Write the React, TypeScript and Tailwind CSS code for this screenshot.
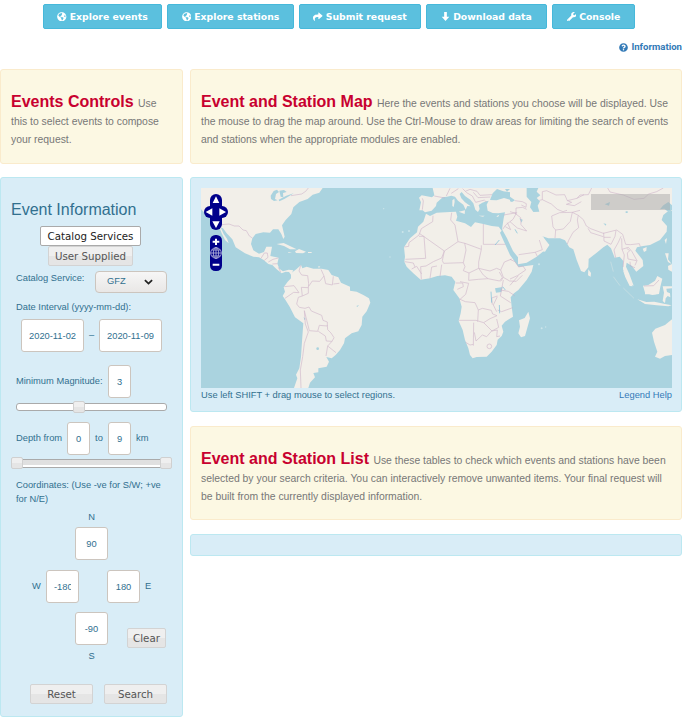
import type { ReactNode } from "react";
import { FaGlobeAmericas, FaShare, FaWrench, FaQuestionCircle } from "react-icons/fa";

function DownArrow() {
  return (
    <svg viewBox="0 0 10 10" className="h-[9px] w-[9px]" fill="currentColor">
      <path d="M3.5 0h3v5.2h2.7L5 10 .8 5.2h2.7z" />
    </svg>
  );
}

function NavButton({ icon, label, size }: { icon: ReactNode; label: string; size: string }) {
  return (
    <button
      className={`flex h-[25px] items-center justify-center gap-[3px] whitespace-nowrap rounded-[2px] border border-[#46b8da] bg-[#5bc0de] font-['DejaVu_Sans',sans-serif] text-[9.3px] font-bold text-white ${size}`}
    >
      {icon}
      <span>{label}</span>
    </button>
  );
}

function Intro({ title, children, className }: { title: string; children: ReactNode; className: string }) {
  return (
    <section className={`rounded-[3px] border border-[#faebcc] bg-[#fcf8e3] px-[10px] pt-[23px] ${className}`}>
      <p className="text-[10.4px] leading-[18px] text-[#777]">
        <span className="mr-[1.5px] text-[16px] font-bold text-[#c8002f]">{title}</span> {children}
      </p>
    </section>
  );
}

function Field({ value, size }: { value: string; size: string }) {
  return (
    <input
      readOnly
      value={value}
      className={`h-[33px] rounded-[3px] border border-[#ccc5be] bg-white px-[7px] text-[9.33px] text-[#31708f] outline-none ${size}`}
    />
  );
}

function GreyButton({ label, size }: { label: string; size: string }) {
  return (
    <button
      className={`flex h-[20px] items-center justify-center rounded-[2px] border border-[#d3d3d3] bg-linear-to-b from-[#efefef] from-50% to-[#e5e5e5] to-50% pt-px font-['DejaVu_Sans',sans-serif] text-[10.25px] text-[#555] ${size}`}
    >
      {label}
    </button>
  );
}

function Handle({ place }: { place: string }) {
  return (
    <span
      className={`absolute h-[12px] w-[12px] rounded-[2px] border border-[#d0d0d0] bg-linear-to-b from-[#efefef] from-50% to-[#e5e5e5] to-50% ${place}`}
    />
  );
}

function WorldMap() {
  return (
    <svg viewBox="48 54 1413 600" className="block h-[200px] w-[471px] bg-[#aad3df]" preserveAspectRatio="none">
      <g fill="#f2efe9">
        <path d="M48 54V118L60 130 75 145 88 150 103 172 110 190 120 210 131 220 126 206 116 192 107 172 114 175 125 190 142 208 152 232 180 250 205 260 222 262 236 270 250 282 262 285 275 298 290 310 302 305 312 306 318 314 325 301 311 299 294 304 283 296 277 281 281 263 256 258 261 230 244 230 237 246 222 251 205 241 198 222 202 205 212 192 235 187 255 188 264 178 280 178 289 192 295 207 299 200 291 166 302 150 319 132 325 112 343 96 368 87 383 74 403 68 413 54Z" />
        <path d="M318 310L334 298 348 285 352 295 365 290 385 296 410 296 430 300 440 315 460 322 468 338 495 350V362L515 365 535 375 552 385 556 398 545 424 532 440 530 465 520 484 500 490 480 505 477 520 465 540 452 555 440 565 424 561 432 575 425 590 400 595 400 607 385 609 390 622 375 638 370 654H327L337 625 333 614 343 595 348 560 352 500 355 460 330 442 314 410 300 388 293 378 300 365 296 352 308 335 318 325Z" />
        <path d="M275 222L296 219 335 238 315 238 297 228ZM330 244L342 237 363 245 354 250 333 249ZM309 246L321 248 311 249ZM369 246H380V249H369ZM400 288L406 290 401 294Z" />
      </g>
      <g transform="translate(495)">
        <g fill="#f2efe9">
          <path d="M228 131L240 138 260 128 300 126 318 125 322 140 318 152 345 160 363 171 375 157 400 162 425 168 446 170 455 182 450 188 462 215 480 255 500 283 506 291 550 285 545 305 530 330 505 360 492 370 482 382 485 410 489 440 465 455 455 467 460 485 455 498 443 509 440 525 425 545 410 560 380 561 368 565 360 555 355 535 345 510 338 480 326 453 332 430 335 410 328 385 310 360 316 335 305 320 285 316 262 318 240 325 212 329 190 310 170 290 163 275 165 260 162 232 180 205 201 187 204 170 220 155Z" />
          <path d="M248 54L253 76 246 82 215 76 207 83 213 97 208 121 218 121 225 127 245 122 258 108 260 98 278 82 291 80 304 77 315 80 324 92 340 104 347 119 352 108 362 109 345 97 334 85 329 72 335 66 345 78 361 89 370 100 376 119 384 126 389 117 386 105 397 98 405 95 416 92 410 104 413 122 428 129 445 130 465 127 461 145 456 178 471 205 489 243 504 262V283L530 278 560 260 585 240 598 225 585 212 579 200 567 209 550 204 530 174 500 130V54Z" />
          <path d="M326 125L345 121 344 132ZM307 91L313 86 314 95 311 111 307 108ZM386 137H404L399 140ZM439 139L448 134 444 141ZM535 425L540 445 525 498 513 502 505 490 510 470 507 451 524 444Z" />
          <path d="M510 232L585 245 598 225 579 200 500 130H495Z" />
        </g>
        <g fill="#aad3df">
          <path d="M420 90L428 70 441 57 460 64 485 67 513 86 490 92 462 84 440 91Z" />
          <path d="M435 355L458 351 454 366 438 368ZM465 57L480 57 471 65Z" />
        </g>
      </g>
      <g transform="translate(975)">
        <path fill="#f2efe9" d="M0 54H486V122L472 125 460 135 455 150 471 168 470 185 450 210 420 225 395 229 381 232 376 242 398 270 400 288 379 305 365 287 350 278 348 290 357 310 371 347 365 344 347 320 339 298 340 273 329 260 314 263 303 235 292 224 280 232 260 248 236 267 235 292 223 307 213 303 200 270 190 238 178 232 165 211 150 205 115 205 102 200 80 197 60 176 50 178 0 175Z" />
        <g fill="#f2efe9">
          <path d="M235 298L243 309 242 320 234 316ZM339 301L357 323 368 349 359 348 346 322ZM398 236L410 231 409 242 402 246ZM464 210L471 204 468 222ZM465 250H476L474 268 485 282 474 276ZM474 288L486 282V305L475 299ZM399 347L415 345 435 332 442 318 457 326 451 350 447 372 427 375 405 368ZM458 349H486V355L469 356 471 366 480 370 481 382 473 378 467 385 465 399 458 393 462 368Z" />
          <path d="M382 388L409 396 433 395 465 402 485 406 475 409 440 406 405 402ZM405 360L440 360 437 373 405 373Z" />
          <path d="M486 448L465 465 436 476 426 488 432 515 442 545 435 560 450 566 465 558 486 555Z" />
        </g>
        <path fill="#aad3df" d="M50 54H85L80 65 91 76 80 84 90 94 83 107 88 125 70 126 60 112 64 96 50 80ZM0 80L15 91 6 96 0 94ZM450 118L460 106 475 96 486 106V120L476 127 463 116ZM28 145L38 149 35 158ZM280 160L289 162 287 167ZM347 124H353V129H347ZM284 103L300 96 297 107Z" />
        <path fill="none" stroke="#f2efe9" strokeWidth="2" d="M302 275L310 305 M310 320L330 347 M340 354L372 385" opacity=".5" />
      </g>
      <g fill="#aad3df">
        <path d="M257 77L266 63 276 59 282 66 273 72 270 87 278 91 267 93 258 87ZM283 62L297 60 305 66 294 69 295 82 287 80ZM281 89L304 77 326 70 318 75 298 87 283 94Z" />
        <circle cx="398" cy="536" r="4" />
        <path d="M514 408L522 405 517 411ZM356 441L362 447 358 450Z" />
      </g>
      <g fill="none" stroke="#c9adc6" strokeWidth="2.2" opacity=".72" strokeLinejoin="round">
        <path d="M110 164L132 162 148 168 162 168 174 180 184 182 193 198 202 204M228 265L238 249 247 249 249 262 238 271M250 276L264 268 280 264M262 282L277 281M280 292L287 306M318 77L350 72 362 64 370 54" />
        <path d="M347 286L342 303 350 315 368 317 371 341 370 353 349 352 352 378 340 382 335 402 343 412 360 415 372 411 379 423 410 436 414 451 427 456 427 468 403 466 398 484 373 482 358 422M400 484L421 498 424 513 441 514 447 503 438 489 428 479 427 466M428 528L441 514M428 528L453 548M428 528L423 558M358 422L361 462 370 486 358 520 353 560 346 600 348 654M371 349L382 333 404 334 417 318 408 298M417 318L422 341 442 345 445 319M445 342L463 340M298 350L327 347 342 368 326 367 300 385M352 378L370 370 370 353" />
      </g>
      <g transform="translate(495)" fill="none" stroke="#c9adc6" strokeWidth="2.2" opacity=".72" strokeLinejoin="round">
        <path d="M217 85L220 93 217 119M249 137L248 155 214 176 207 195 177 218 176 229 163 231M208 190L283 243 324 215 315 165 302 150 305 128M207 199H222L227 265 166 268M324 215L345 220 394 238V226M400 162V223H466M283 243L275 264 250 275 228 288 212 290 214 328M283 243L277 272 281 280 340 278 348 240 344 219M394 238L386 276 386 295 357 309 340 302 345 290 340 278M386 295L400 315 414 326 449 333 457 322 448 306M386 295L420 303 440 295 452 300 463 276 485 267M452 300L460 322 479 333 499 334 517 316M460 322L452 334M357 309L356 331 385 328 414 326M330 335L356 340 347 373 329 389 M317 339H338L340 350 322 358M240 325L245 291 261 288M270 320L275 284M185 297L200 289 215 312M164 275L190 279 195 291M460 330L451 378M451 360L475 364 494 377M451 378L482 398M442 378L425 384 427 404" />
        <path d="M328 387L346 395 375 398 385 420 383 455M327 451H378L401 458 420 446 441 437 428 432 424 421 397 415 385 420M371 458L370 527M373 487L378 513 397 495 410 500 425 483 442 480 440 500 450 498M401 458L426 483 446 472 440 447M443 420L455 425 488 413M442 380L430 405 440 425M347 517L360 525 370 523" />
        <circle cx="418" cy="529" r="7" />
        <path d="M253 78L285 84M289 78L300 55M304 70L325 56M338 56L350 68 367 78 377 97 404 90M370 67L384 83 421 81M346 64L360 58 381 64 390 76 426 74M410 95L404 93M461 135L500 128 489 148 467 165 458 178M466 170L482 179 472 158" />
      </g>
      <g transform="translate(975)" fill="none" stroke="#c9adc6" strokeWidth="2.2" opacity=".72" strokeLinejoin="round">
        <path d="M26 254L54 250 75 247 97 239 88 210M76 247L82 259M0 155L22 174 50 183M15 130L32 143 33 164 50 183M0 125L18 130 18 114 38 112 50 118M15 92L37 95 49 101 48 112 34 105M88 91L97 89V65L110 62 138 75 164 74 172 92 201 85 210 75 235 74 245 54M97 89L124 102 142 118 159 125 171 121M172 92L185 97 169 103 193 107 214 95M125 138L149 128 187 127 205 136M125 138L129 171 137 180 135 204M137 180L160 177 181 154 187 127 210 121M201 85L222 74M205 136L220 149 229 168 242 176 280 190 320 180 338 193 347 223 361 224 388 221 391 230M205 136L202 150 206 173 189 187 176 211 172 222M234 175L242 188 280 200M281 188L282 213 303 223 315 199 318 181M282 202H302M317 263L312 240 325 217 333 199M335 205L336 238 355 232 366 245 381 272 375 286M336 238L343 255 339 291M350 235L359 242 352 249 354 267 380 272M360 275L361 288 375 293M293 54L300 66 340 75 372 88 402 85 416 72 440 65 460 54" />
        <path d="M0 327L22 317 47 300 39 288 26 291M25 317L0 346M402 348L431 347 447 330M0 268L15 275 26 291" />
      </g>
      <g transform="translate(975)" fill="none" stroke="#75bdd8" strokeWidth="2">
        <path d="M-22 350L-14 360M-57 365L-55 398M-32 405L-31 430M-32 210L-45 225M15 178L22 190" />
      </g>
      <g fill="#dceef0" opacity=".7">
        <circle cx="653" cy="186" r="3" /><circle cx="672" cy="183" r="3" /><circle cx="596" cy="116" r="2" /><circle cx="615" cy="261" r="2" /><circle cx="1062" cy="283" r="3" /><circle cx="1070" cy="475" r="3" /><circle cx="1082" cy="471" r="2" />
      </g>
    </svg>
  );
}

function MapControls() {
  return (
    <svg viewBox="57 72 75 234" className="absolute left-[3px] top-[6px] h-[78px] w-[25px]">
      <g fill="#00008b">
        <rect x="75" y="72" width="36" height="108" rx="18" />
        <rect x="57" y="108" width="72" height="36" rx="18" />
        <rect x="75" y="195" width="36" height="108" rx="16" />
      </g>
      <g fill="white">
        <path d="M93 79L103 99H83ZM82 115V137L62 126ZM103 115V137L123 126ZM82 154H104L93 174ZM90 206H96V212H103V218H96V225H90V218H83V212H90ZM83 281H103V287H83Z" />
      </g>
      <g fill="none" stroke="#c9c9e4" strokeWidth="2.2">
        <circle cx="93" cy="249" r="16" />
        <ellipse cx="93" cy="249" rx="8" ry="16" />
        <path d="M77 249H109M93 233V265M80 240H106M80 258H106" />
      </g>
    </svg>
  );
}

export default function App() {
  return (
    <div className="h-[724px] w-[682px] overflow-hidden bg-white font-['Liberation_Sans',Arial,sans-serif] text-[9.33px] text-[#31708f]">
      <nav className="flex gap-[5px] pl-[43px] pt-[4px]">
        <NavButton size="w-[119px]" icon={<FaGlobeAmericas className="text-[9.5px]" />} label="Explore events" />
        <NavButton size="w-[127px]" icon={<FaGlobeAmericas className="text-[9.5px]" />} label="Explore stations" />
        <NavButton size="w-[122px]" icon={<FaShare className="text-[9.5px]" />} label="Submit request" />
        <NavButton size="w-[121px]" icon={<DownArrow />} label="Download data" />
        <NavButton size="w-[83px]" icon={<FaWrench className="text-[9.5px]" />} label="Console" />
      </nav>
      <div className="flex h-[40px] items-start justify-end pt-[12px]">
        <a className="flex items-center gap-[3px] font-['Roboto',sans-serif] text-[9.6px] font-bold leading-[12px] text-[#337ab7]">
          <FaQuestionCircle className="text-[9px]" />
          <span>Information</span>
        </a>
      </div>

      <div className="flex gap-[7px]">
        <div className="w-[183px] shrink-0">
          <Intro title="Events Controls" className="h-[95px]">
            Use this to select events to compose your request.
          </Intro>
          <section className="mt-[13px] h-[540px] rounded-[3px] border border-[#bce8f1] bg-[#d9edf7] pt-[22px]">
            <h2 className="pl-[10px] text-[16px] leading-[20px]">Event Information</h2>
            <div className="mt-[6px] flex flex-col items-center pr-[2px]">
              <button className="h-[20px] w-[101px] rounded-[2px] border border-[#aaa] bg-white font-['DejaVu_Sans',sans-serif] text-[10.25px] leading-[18px] text-[#212121]">
                Catalog Services
              </button>
              <GreyButton size="w-[85px]" label="User Supplied" />
            </div>
            <div className="mt-[5px] flex h-[22px] pl-[15px]">
              <label className="w-[79px] leading-[14px]">Catalog Service:</label>
              <div className="flex w-[72px] items-center justify-between rounded-[4px] border border-[#ccc5be] bg-linear-to-b from-[#f6f6f6] to-[#e9e7e6] pl-[11px] pr-[13px]">
                <span>GFZ</span>
                <svg viewBox="0 0 10 6" className="h-[6px] w-[9px]" fill="none" stroke="#222" strokeWidth="2">
                  <path d="M1 1l4 3.8L9 1" />
                </svg>
              </div>
            </div>
            <p className="mt-[7px] pl-[15px] leading-[14px]">Date Interval (yyyy-mm-dd):</p>
            <div className="mt-[5px] flex items-center pl-[20px]">
              <Field size="w-[63px]" value="2020-11-02" />
              <span className="w-[15px] pt-px text-center">–</span>
              <Field size="w-[63px]" value="2020-11-09" />
            </div>
            <div className="mt-[13px] flex items-center pl-[15px]">
              <label className="w-[92px] pt-px">Minimum Magnitude:</label>
              <Field size="w-[23px] text-center" value="3" />
            </div>
            <div className="relative ml-[15px] mt-[5px] h-[8px] w-[151px] rounded-[3px] border border-[#aaa] bg-white">
              <Handle place="left-[56px] -top-[3px]" />
            </div>
            <div className="mt-[11px] flex items-center pl-[15px]">
              <label className="w-[51px] pt-px">Depth from</label>
              <Field size="w-[23px] text-center" value="0" />
              <span className="w-[18px] pt-px text-center">to</span>
              <Field size="w-[23px] text-center" value="9" />
              <span className="pl-[5px] pt-px">km</span>
            </div>
            <div className="relative ml-[15px] mt-[4px] h-[9px] w-[151px] border-y border-[#aaa] bg-linear-to-b from-[#e0e0e0] from-75% to-white to-75%">
              <Handle place="-left-[5px] -top-[3px]" />
              <Handle place="-right-[5px] -top-[3px]" />
            </div>
            <p className="mt-[10px] w-[180px] pl-[15px] leading-[14px]">
              Coordinates: (Use -ve for S/W; +ve
              <br />
              for N/E)
            </p>
            <div className="w-[181px] text-center leading-[14px]">
              <p className="mt-[4px]">N</p>
              <Field size="mt-[3px] w-[33px] text-center" value="90" />
            </div>
            <div className="mt-[10px] flex items-center pl-[31px]">
              <span className="w-[14px]">W</span>
              <Field size="w-[33px]" value="-180" />
              <Field size="ml-[28px] w-[33px] text-center" value="180" />
              <span className="pl-[5px]">E</span>
            </div>
            <div className="mt-[9px] flex items-start pl-[74px]">
              <Field size="w-[33px] text-center" value="-90" />
              <GreyButton size="ml-[19px] mt-[16px] w-[39px]" label="Clear" />
            </div>
            <p className="mt-px w-[181px] text-center leading-[14px]">S</p>
            <div className="mt-[21px] flex gap-[11px] pl-[29px]">
              <GreyButton size="w-[63px]" label="Reset" />
              <GreyButton size="w-[63px]" label="Search" />
            </div>
          </section>
        </div>

        <div className="w-[492px] shrink-0">
          <Intro title="Event and Station Map" className="h-[95px]">
            Here the events and stations you choose will be displayed. Use the mouse to drag the map around. Use the
            Ctrl-Mouse to draw areas for limiting the search of events and stations when the appropriate modules are
            enabled.
          </Intro>
          <section className="mt-[13px] h-[235px] rounded-[3px] border border-[#bce8f1] bg-[#d9edf7] px-[10px] pt-[10px]">
            <div className="relative h-[200px] w-[471px] overflow-hidden">
              <WorldMap />
              <MapControls />
              <span className="absolute left-[390px] top-[6px] h-[16px] w-[79px] bg-[#aaa]/50" />
            </div>
            <div className="flex w-[471px] justify-between leading-[14px]">
              <span>Use left SHIFT + drag mouse to select regions.</span>
              <a className="text-[#337ab7]">Legend Help</a>
            </div>
          </section>
          <Intro title="Event and Station List" className="mt-[14px] h-[94px]">
            Use these tables to check which events and stations have been selected by your search criteria. You can
            interactively remove unwanted items. Your final request will be built from the currently displayed
            information.
          </Intro>
          <section className="mt-[14px] h-[22px] rounded-[3px] border border-[#bce8f1] bg-[#d9edf7]" />
        </div>
      </div>
    </div>
  );
}
